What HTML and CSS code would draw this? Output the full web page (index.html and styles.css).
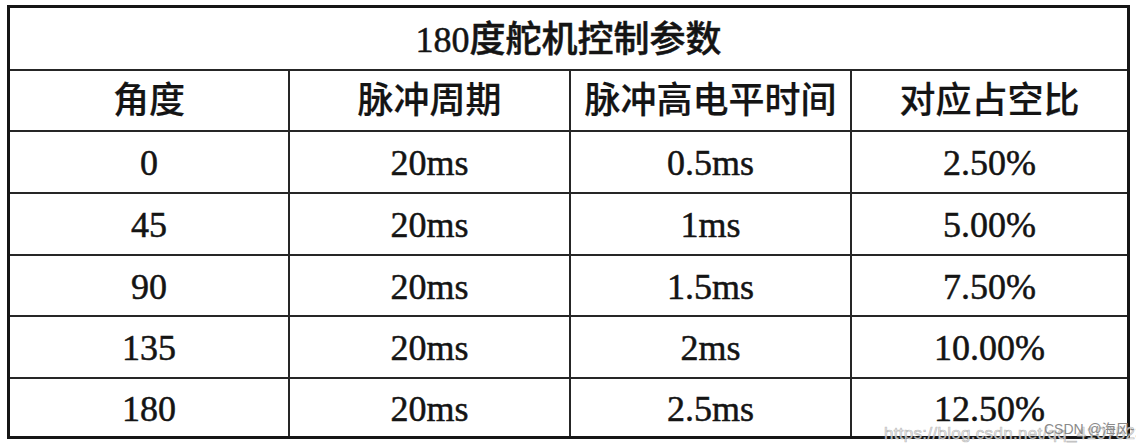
FILE: index.html
```html
<!DOCTYPE html>
<html lang="zh">
<head>
<meta charset="utf-8">
<link rel="stylesheet" href="styles.css">
</head>
<body>
<div class="page">
  <div class="servo">
    <div class="cell title">180度舵机控制参数</div>
    <div class="cell head">角度</div>
    <div class="cell head">脉冲周期</div>
    <div class="cell head">脉冲高电平时间</div>
    <div class="cell head end">对应占空比</div>

    <div class="cell num">0</div>
    <div class="cell num">20ms</div>
    <div class="cell num">0.5ms</div>
    <div class="cell num end">2.50%</div>

    <div class="cell num">45</div>
    <div class="cell num">20ms</div>
    <div class="cell num">1ms</div>
    <div class="cell num end">5.00%</div>

    <div class="cell num">90</div>
    <div class="cell num">20ms</div>
    <div class="cell num">1.5ms</div>
    <div class="cell num end">7.50%</div>

    <div class="cell num">135</div>
    <div class="cell num">20ms</div>
    <div class="cell num">2ms</div>
    <div class="cell num end">10.00%</div>

    <div class="cell num last">180</div>
    <div class="cell num last">20ms</div>
    <div class="cell num last">2.5ms</div>
    <div class="cell num last end">12.50%</div>
  </div>
  <div class="watermark">
    <span class="wm-url">https://blog.csdn.net/qq_41075230</span>
    <span class="wm-author">CSDN @海风-</span>
  </div>
</div>
</body>
</html>
```
FILE: styles.css
```css
html, body {
  margin: 0;
  padding: 0;
  background: #ffffff;
}
.page {
  position: relative;
  width: 1136px;
  height: 444px;
  overflow: hidden;
  padding: 5px 0 0 7px;
  box-sizing: border-box;
}
.servo {
  display: grid;
  grid-template-columns: 280px 281px 281px 275px;
  grid-template-rows: 63px 61px 62px 62px 61px 62px 57px;
  width: 1123px;
  box-sizing: border-box;
  border: 3px solid #161616;
  font-family: "Liberation Serif", "Noto Sans CJK SC", serif;
  color: #141414;
  font-size: 36px;
  line-height: 1;
  font-weight: 500;
}
.cell {
  display: flex;
  align-items: center;
  justify-content: center;
  border-right: 2px solid #262626;
  border-bottom: 2px solid #262626;
  white-space: nowrap;
  -webkit-text-stroke: 0.5px #141414;
}
.cell.end { border-right: none; }
.cell.last { border-bottom: none; }
.title {
  grid-column: 1 / -1;
  border-right: none;
  padding-top: 2px;
}
.head { -webkit-text-stroke: 0.2px #141414; }
.num { padding-top: 2px; }
.watermark {
  position: absolute;
  left: 884px;
  top: 424px;
  width: 252px;
  height: 20px;
}
.wm-url {
  position: absolute;
  left: 0;
  top: 0;
  font-family: "Liberation Sans", sans-serif;
  font-size: 17px;
  line-height: 20px;
  letter-spacing: 0.3px;
  color: rgba(236, 236, 236, 0.85);
  -webkit-text-stroke: 0.7px rgba(140, 140, 140, 0.55);
  white-space: nowrap;
}
.wm-author {
  position: absolute;
  left: 160px;
  top: -3px;
  font-family: "Liberation Sans", "Noto Sans CJK SC", sans-serif;
  font-size: 14px;
  line-height: 16px;
  color: #8a8a8a;
  white-space: nowrap;
}
```
